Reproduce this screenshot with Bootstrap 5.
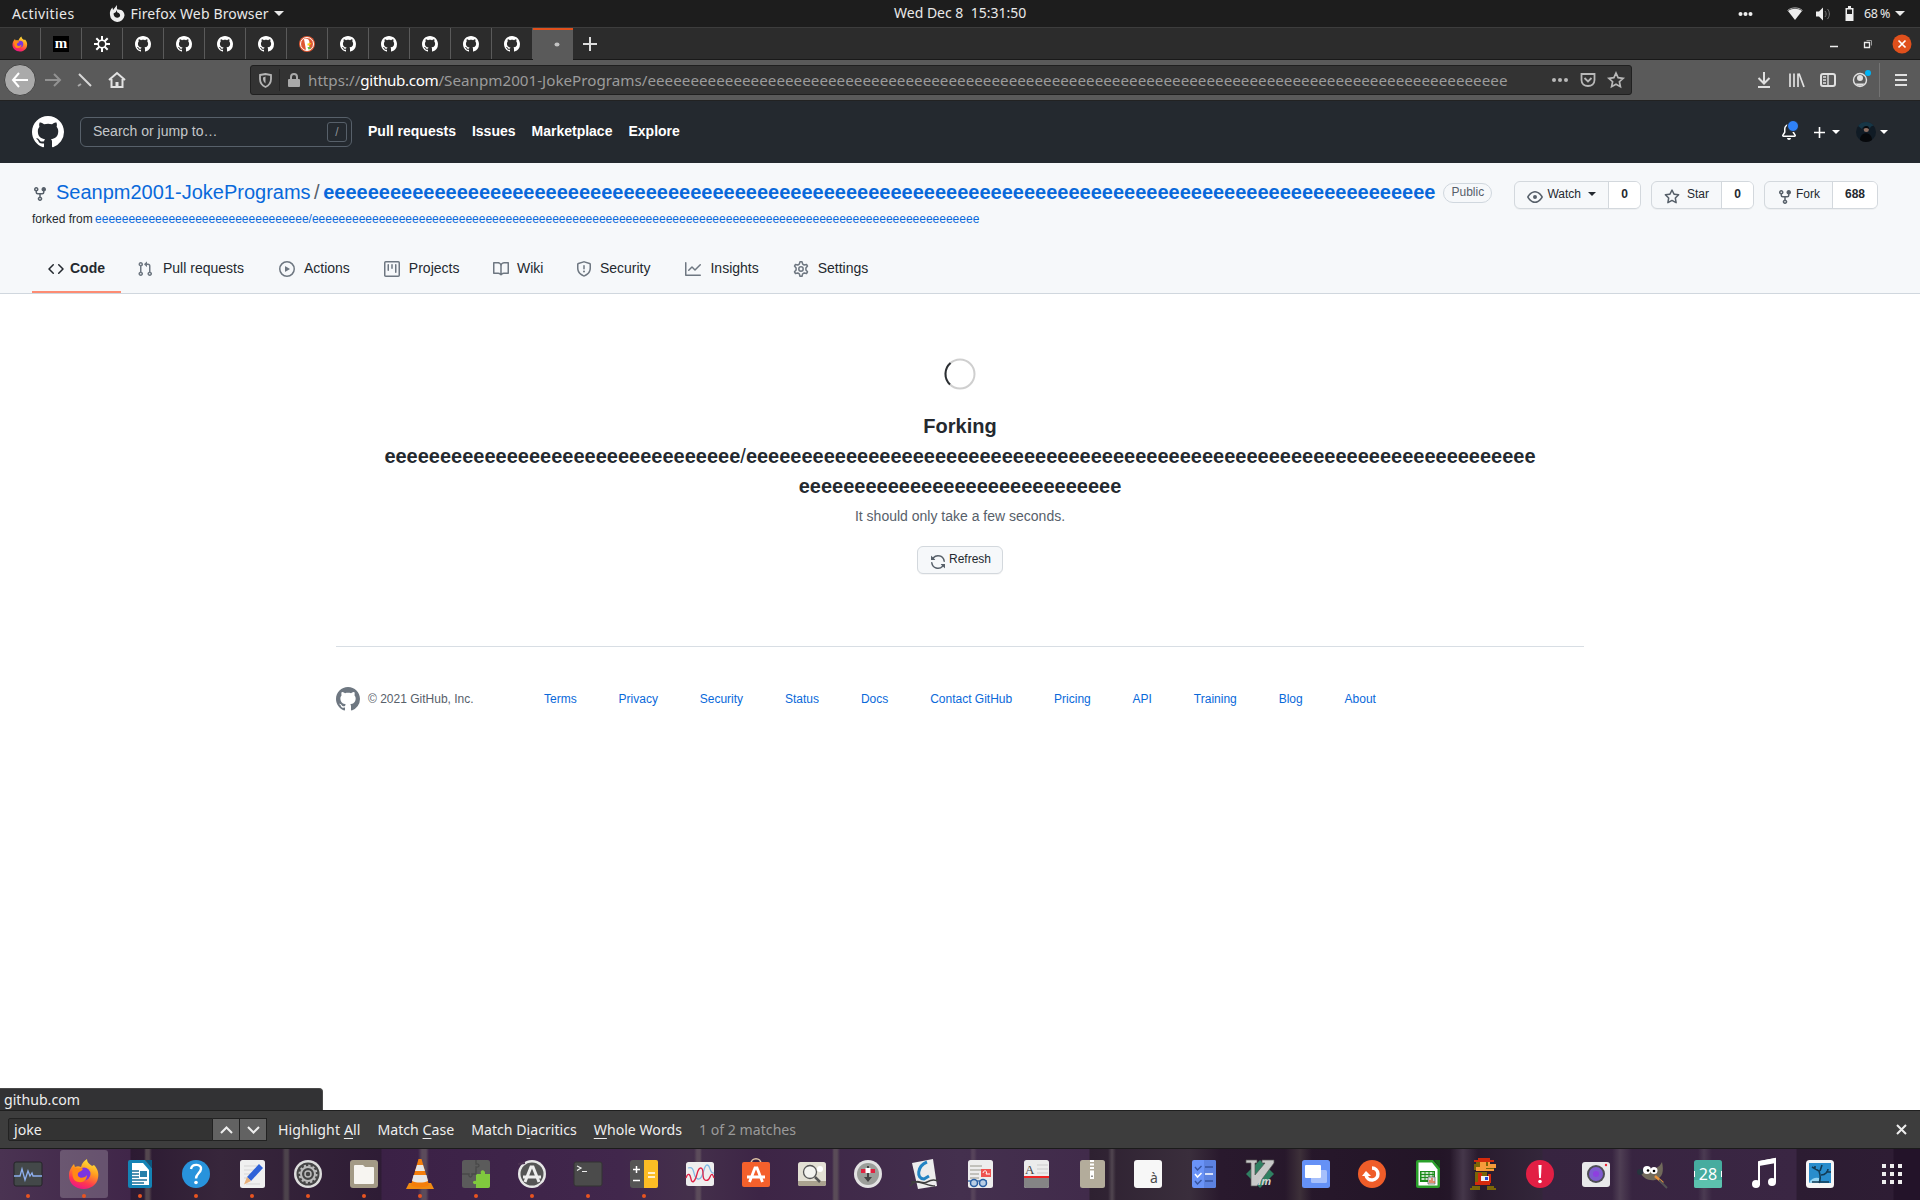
<!DOCTYPE html>
<html lang="en">
<head>
<meta charset="utf-8">
<title>Forking</title>
<meta name="viewport" content="width=device-width, initial-scale=1">
<link href="https://cdn.jsdelivr.net/npm/bootstrap@5.3.0/dist/css/bootstrap.min.css" rel="stylesheet">
<style>
body{height:1200px;overflow:hidden;background:#fff;color:#24292f;font:14px/21px "Liberation Sans",Arial,sans-serif}
a{text-decoration:none;color:#0969da}
svg{display:block;flex:none}
.oct{width:16px;height:16px;fill:currentColor}
.ui{font-family:"Noto Sans","Open Sans",sans-serif;font-size:14.15px;white-space:pre}
.panel{height:27px;background:#1d1d1d;color:#e9e9e9}
.panel .ui{font-size:14px}
.tabs{height:33px;background:#2c2c2c;border-top:1px solid #3d3d3d;border-bottom:1px solid #191919}
.tabx{width:41px;border-right:1px solid #5a5a5a;color:#fff}
.tabx svg{width:16px;height:16px}
.tabx.now{width:40px;background:#5a5a5a;border:0;border-top:2px solid #e0501c;margin-bottom:-1px}
.tools{height:41px;background:#5a5a5a;border-bottom:1px solid #222;color:#e0e0e0}
.urlbar{width:1382px;height:30px;background:#333;border:1px solid #202020;border-radius:3px;color:#9b9b9b}
.urlbar .ui{font-size:15.2px}
.backbtn{width:32px;height:32px;border-radius:50%;background:#aaa;border:1px solid #454545;color:#fff}
.ghead{height:62px;background:#24292f;color:#fff;padding-left:32px;padding-right:32px}
.gsearch{width:272px;height:30px;border:1px solid #57606a;border-radius:6px;color:#c3c6c9;padding:0 4px 0 12px}
.slashkey{width:20px;height:20px;border:1px solid #57606a;border-radius:3px;color:#8b9096;font-size:12px;line-height:18px}
.gnav{padding-bottom:1px}
.gnav a{color:#fff;font-weight:700}
.caret{width:0;height:0;border:4px solid transparent;border-top-color:currentColor;border-bottom:0}
.rhead{height:131px;background:#f6f8fa;border-bottom:1px solid #d0d7de}
.rtitle{font-size:20px;line-height:30px}
.pub{font-size:12px;line-height:17px;border:1px solid #d0d7de;border-radius:20px;color:#57606a;padding:0 7px 1px}
.gbtn{height:28px;background:#f6f8fa;border:1px solid #d3d8dd;border-radius:6px;font-size:12px;line-height:25px;box-shadow:0 1px 0 rgba(27,31,36,.04)}
.gbtn .oct{color:#57606a;margin-top:7px}
.cnt{background:#fff;border-left:1px solid #d3d8dd;border-radius:0 5px 5px 0;font-weight:700;height:26px}
.tabitem{height:48px;padding-bottom:2px;gap:9px;color:#24292f}
.tabitem .oct{color:#6e7781;margin-top:2px}
.tabitem.sel{font-weight:700;border-bottom:2px solid #fd8c73;padding:0 16px;gap:6px;width:89px}
.tabitem.sel .oct{color:#24292f}
.forkttl{font-size:20px;line-height:30px;font-weight:700}
.foot{width:1248px;border-top:1px solid #d8dee4;font-size:12px;color:#57606a}
.popstat{width:323px;height:22px;background:#323234;border-top:1px solid #4a4a4a;border-right:1px solid #4a4a4a;border-radius:0 4px 0 0;color:#eee;padding-left:4px;line-height:21px}
.findbar{height:39px;background:#3d3d3d;border-top:1px solid #1f1f1f;border-bottom:1px solid #1b1b1b;color:#eee;padding-left:8px}
.findin{width:205px;height:23px;background:#333;border:1px solid #222;border-radius:2px 0 0 2px;padding-left:5px;line-height:21px}
.findbtn{width:27px;height:23px;background:#626262;border:1px solid #222;border-left:0}
.findbar u{text-underline-offset:3px}
.dock{height:51px;background:
 linear-gradient(90deg,transparent 144px,#54474f 146px,#54474f 149px,transparent 152px,transparent 282px,#4d434c 285px,#4d434c 288px,transparent 290px,transparent 418px,#5b4b5b 422px,#5b4b5b 426px,transparent 429px,transparent 694px,#5c4c5b 697px,#5c4c5b 700px,transparent 702px,transparent 832px,#5a4c58 834px,#5a4c58 837px,transparent 840px,transparent 970px,#56435a 972px,#56435a 974px,transparent 977px,transparent 1108px,#514650 1112px,transparent 1116px,transparent 1285px,#3d3039 1300px,transparent 1312px,transparent 1450px,#45374a 1463px,transparent 1478px,transparent 1612px,#4f3f54 1620px,transparent 1632px,transparent 1698px,#4b3b52 1704px,transparent 1712px),
 linear-gradient(90deg,#4a3352 0,#402649 130px,#2c1a32 131px,#37263b 220px,#2e1c35 381px,#3b2146 382px,#41274c 620px,#44304b 690px,#3d2546 760px,#44304e 960px,#412b4b 1089px,#2e2131 1090px,#3a2e3c 1190px,#29192d 1220px,#231527 1440px,#33263a 1542px,#372440 1543px,#3a2643 1796px,#2c1c32 1797px,#2e1d34 1893px,#231329 1894px,#231329 100%)}
.app{width:56px;height:51px;padding-bottom:1px;position:relative;display:flex;flex:none;align-items:center;justify-content:center}
.app svg{width:32px;height:32px;overflow:visible;z-index:1}
.app.run::after{content:"";position:absolute;left:26px;bottom:2px;width:4px;height:4px;border-radius:50%;background:#e95420}
.app.cur::before{content:"";position:absolute;left:4px;top:1px;width:48px;height:48px;border-radius:3px;background:rgba(255,255,255,.2)}
.app svg text{font-family:"Noto Sans",sans-serif}
</style>
<script src="https://cdn.jsdelivr.net/npm/bootstrap@5.3.0/dist/js/bootstrap.bundle.min.js"></script>
</head>
<body class="d-flex flex-column">
<svg width="0" height="0" class="position-absolute">
<symbol id="gh" viewBox="0 0 16 16"><path d="M8 0C3.58 0 0 3.58 0 8c0 3.54 2.29 6.53 5.47 7.59.4.07.55-.17.55-.38 0-.19-.01-.82-.01-1.49-2.01.37-2.53-.49-2.69-.94-.09-.23-.48-.94-.82-1.13-.28-.15-.68-.52-.01-.53.63-.01 1.08.58 1.23.82.72 1.21 1.87.87 2.33.66.07-.52.28-.87.51-1.07-1.78-.2-3.64-.89-3.64-3.95 0-.87.31-1.59.82-2.15-.08-.2-.36-1.02.08-2.12 0 0 .67-.21 2.2.82.64-.18 1.32-.27 2-.27.68 0 1.36.09 2 .27 1.53-1.04 2.2-.82 2.2-.82.44 1.1.16 1.92.08 2.12.51.56.82 1.27.82 2.15 0 3.07-1.87 3.75-3.65 3.95.29.25.54.73.54 1.48 0 1.07-.01 1.93-.01 2.2 0 .21.15.46.55.38A8.013 8.013 0 0016 8c0-4.42-3.58-8-8-8z"/></symbol>
<symbol id="fork" viewBox="0 0 16 16"><path d="M5 3.25a.75.75 0 11-1.5 0 .75.75 0 011.5 0zm0 2.122a2.25 2.25 0 10-1.5 0v.878A2.25 2.25 0 005.75 8.5h1.5v2.128a2.251 2.251 0 101.5 0V8.5h1.5a2.25 2.25 0 002.25-2.25v-.878a2.25 2.25 0 10-1.5 0v.878a.75.75 0 01-.75.75h-4.5A.75.75 0 015 6.25v-.878zm3.75 7.378a.75.75 0 11-1.5 0 .75.75 0 011.5 0zm3-8.75a.75.75 0 100-1.5.75.75 0 000 1.5z"/></symbol>
<linearGradient id="ffo" x1=".7" y1="0" x2=".3" y2="1"><stop offset="0" stop-color="#ffe83c"/><stop offset=".4" stop-color="#ff9a1f"/><stop offset=".75" stop-color="#ff3750"/><stop offset="1" stop-color="#e9148c"/></linearGradient>
<symbol id="ff" viewBox="-16 -16 32 32"><path d="M-14-4c1-2 2-4 4-6l1 3c2-1 4-1 6 0 1-4 3-6 6-8 0 4 3 5 5 7l2-1c4 4 5 9 4 13-1 7-8 11-14 11-9 0-15-6-15-13 0-2 0-4 1-6z" fill="url(#ffo)"/><circle cx="0" cy="0" r="6.5" fill="#7a35e0"/><path d="M-11-7c3 1 5 2 9 1 1 1 1 2-1 3s-4 2-3 5c2 3 7 2 9-1 0 5-4 8-8 7-5 0-8-5-6-15z" fill="#ff8a16"/></symbol>
</svg>

<header class="panel d-flex align-items-center position-relative">
  <span class="ui" style="margin-left:12px;letter-spacing:.42px">Activities</span>
  <svg style="margin-left:34px" width="16" height="20" viewBox="0 0 16 20"><path d="M1 11C.5 8 1.500 5 3.500 3.500L4 6l4-5c0 2-.5 3 .5 4.500C13 5 15.500 8 15.500 11.500a7.300 7.500 0 01-14.500-.5z" fill="#eee"/><path d="M4.500 9.500L7 8V6l1.500 2.500c2 .5 3 2 2.500 3.500-1 3-6.500 2-6.500-2.500z" fill="#1d1d1d"/></svg>
  <span class="ui" style="margin-left:6px;letter-spacing:.14px">Firefox Web Browser</span><i class="caret" style="margin-left:5px;border-width:5px 5px 0"></i>
  <span class="ui position-absolute" style="left:894px;top:2px">Wed Dec 8  15:31:50</span>
  <div class="ms-auto d-flex align-items-center" style="margin-right:15px">
    <svg width="150" height="22" viewBox="1738 2 150 22" style="margin-right:-24px"><g fill="#eee"><circle cx="1740.500" cy="13" r="2"/><circle cx="1745.500" cy="13" r="2"/><circle cx="1750.500" cy="13" r="2"/><path d="M1788 10c4-3 10-3 14 0l-7 9z"/><path d="M1816 10.500h3l4-4v13l-4-4h-3z"/><path d="M1848 5h3v2h2.500v13h-8V7h2.500z"/></g><path d="M1787.500 9.500c4-3.500 11-3.500 15 0" fill="none" stroke="#aaa"/><path d="M1825 10c1.500 2 1.500 4 0 6M1827.500 8c2.500 3 2.500 7 0 10" fill="none" stroke="#777"/><path d="M1847 8.500h5v4.500h-5z" fill="#1d1d1d"/></svg>
    <span class="ui" style="font-size:12.500px;letter-spacing:-.5px">68 %</span><i class="caret" style="margin-left:5px;border-width:5px 5px 0"></i>
  </div>
</header>

<nav class="tabs d-flex">
  <div class="tabx d-flex align-items-center justify-content-center"><svg><use href="#ff"/></svg></div>
  <div class="tabx d-flex align-items-center justify-content-center"><svg viewBox="0 0 16 16"><path d="M0 0h16v16H0z"/><text x="8" y="12" text-anchor="middle" font-family="Liberation Serif,serif" font-weight="700" font-size="15" fill="#fff">m</text></svg></div>
  <div class="tabx d-flex align-items-center justify-content-center"><svg viewBox="0 0 16 16" fill="none" stroke="#fff"><circle cx="8" cy="8" r="3.800" stroke-width="1.600"/><path stroke-width="2" d="M8 0v4M8 12v4M0 8h4M12 8h4M2.300 2.300l3 3M10.700 10.700l3 3M2.300 13.700l3-3M10.700 5.300l3-3"/></svg></div>
  <div class="tabx d-flex align-items-center justify-content-center"><svg fill="#fff"><use href="#gh"/></svg></div>
  <div class="tabx d-flex align-items-center justify-content-center"><svg fill="#fff"><use href="#gh"/></svg></div>
  <div class="tabx d-flex align-items-center justify-content-center"><svg fill="#fff"><use href="#gh"/></svg></div>
  <div class="tabx d-flex align-items-center justify-content-center"><svg fill="#fff"><use href="#gh"/></svg></div>
  <div class="tabx d-flex align-items-center justify-content-center"><svg viewBox="0 0 16 16"><circle cx="8" cy="8" r="8" fill="#de5833"/><circle cx="8" cy="8" r="6.500" fill="none" stroke="#fff"/><path d="M5 3c3-1 5 0 5.500 3L10 9l1 5H7z" fill="#fff"/><path d="M8.500 7.500l4-.5-2 2.500H8.500z" fill="#fdd20a"/><path d="M8.500 11l3 0v2l-2 .5z" fill="#65bc46"/></svg></div>
  <div class="tabx d-flex align-items-center justify-content-center"><svg fill="#fff"><use href="#gh"/></svg></div>
  <div class="tabx d-flex align-items-center justify-content-center"><svg fill="#fff"><use href="#gh"/></svg></div>
  <div class="tabx d-flex align-items-center justify-content-center"><svg fill="#fff"><use href="#gh"/></svg></div>
  <div class="tabx d-flex align-items-center justify-content-center"><svg fill="#fff"><use href="#gh"/></svg></div>
  <div class="tabx d-flex align-items-center justify-content-center"><svg fill="#fff"><use href="#gh"/></svg></div>
  <div class="tabx now d-flex align-items-center justify-content-center"><svg viewBox="0 0 16 16"><ellipse cx="12" cy="7.500" rx="2.500" ry="2" fill="#c4c4c4"/></svg></div>
  <svg style="margin:9px 0 0 10px" width="14" height="14" viewBox="0 0 14 14"><path d="M7 0v14M0 7h14" stroke="#ddd" stroke-width="2"/></svg>
  <svg class="ms-auto me-2" width="84" height="31" viewBox="1828 28 84 31"><path d="M1830 46.500h8" stroke="#eee" stroke-width="1.500"/><path d="M1864.500 42.500h5v5h-5z" fill="none" stroke="#eee" stroke-width="1.300"/><path d="M1866.500 40.500h5v5" fill="none" stroke="#999"/><circle cx="1902" cy="44" r="9.500" fill="#e0501c"/><path d="M1898.500 40.500l7 7m0-7l-7 7" stroke="#fff" stroke-width="1.700"/></svg>
</nav>

<nav class="tools d-flex align-items-center">
  <div class="backbtn d-flex align-items-center justify-content-center" style="margin-left:4px"><svg width="18" height="16" viewBox="0 0 18 16" fill="none" stroke="#fff" stroke-width="2"><path d="M17 8H2M8 1L2 8l6 7"/></svg></div>
  <svg width="90" height="22" viewBox="42 69 90 22" style="margin-left:6px" fill="none" stroke="#e2e2e2" stroke-width="2"><path stroke="#929292" d="M45 80h15M54 74l6 6-6 6"/><path stroke="#d8d8d8" d="M79 74l12 12"/><path stroke="#aaa" d="M78 86l3-2"/><path d="M109 80l8-7 8 7M111.500 79v8h11v-8"/><path d="M117 87v-5" stroke-width="3"/></svg>
  <div class="urlbar d-flex align-items-center" style="margin-left:118px">
    <svg style="margin-left:8px" width="13" height="15" viewBox="0 0 13 15"><path d="M1 2l5.500-1L12 2v4c0 4-2 6.500-5.500 8C3 12.500 1 10 1 6z" fill="none" stroke="#b5b5b5" stroke-width="1.800"/><path d="M6.500 3.500v7C4.500 9 4 7.500 4 4.500z" fill="#b5b5b5"/></svg>
    <i style="width:1px;height:22px;background:#252525;margin:0 8px 0 7px"></i>
    <svg width="12" height="14" viewBox="0 0 12 14"><path d="M3 7V4a3 3 0 016 0v3" fill="none" stroke="#aaa" stroke-width="2"/><rect y="6" width="12" height="8" rx="1" fill="#aaa"/></svg>
    <div class="ui d-flex" style="margin-left:8px"><span>https://</span><span class="text-white" style="letter-spacing:-.35px">github.com</span><span>/Seanpm2001-JokePrograms/</span><span style="letter-spacing:.035px">eeeeeeeeeeeeeeeeeeeeeeeeeeeeeeeeeeeeeeeeeeeeeeeeeeeeeeeeeeeeeeeeeeeeeeeeeeeeeeeeeeeeeeeeeeeeeeeeeeee</span></div>
    <svg class="ms-auto" style="margin-right:5px" width="76" height="20" viewBox="1550 70 76 20"><g fill="#b8b8b8"><circle cx="1554" cy="80" r="2"/><circle cx="1560" cy="80" r="2"/><circle cx="1566" cy="80" r="2"/></g><path d="M1581.500 74h13v6c0 4-3 6-6.500 6s-6.500-2-6.500-6z M1584.500 78l3.500 3.500 3.500-3.500" fill="none" stroke="#b8b8b8" stroke-width="1.800"/><path d="M1616 73l2.100 4.700 5 .6-3.700 3.400 1 5-4.400-2.500-4.400 2.500 1-5-3.700-3.400 5-.6z" fill="none" stroke="#b8b8b8" stroke-width="1.700"/></svg>
  </div>
  <svg class="ms-auto" width="170" height="40" viewBox="1750 60 170 40" fill="none" stroke="#e0e0e0" stroke-width="2"><path d="M1764 72v11M1758.500 78l5.500 5.500 5.500-5.500M1758 87h12"/><path d="M1790 73.500V87M1794 73.500V87M1798 73.500V87M1799 73.500l5 13.500" stroke-width="1.700"/><rect x="1821" y="74" width="14" height="12" rx="2"/><path d="M1828 74v12M1823 77h3M1823 80h3M1823 83h3" stroke-width="1.400"/><circle cx="1860" cy="80" r="6.500" stroke-width="1.400"/><circle cx="1860" cy="78" r="3" fill="#e0e0e0" stroke="none"/><path d="M1855.500 83.500a5 4 0 009 0z" fill="#e0e0e0" stroke="none"/><circle cx="1868" cy="73" r="3" fill="#00b3f4" stroke="none"/><path d="M1879.500 63v34" stroke="#737373" stroke-width="1"/><path d="M1895 75h12M1895 80h12M1895 85h12"/></svg>
</nav>

<header class="ghead d-flex align-items-center">
  <svg width="32" height="32" fill="#fff"><use href="#gh"/></svg>
  <div class="gsearch d-flex align-items-center justify-content-between ms-3"><span style="margin-top:-2px">Search or jump to…</span><span class="slashkey text-center">/</span></div>
  <nav class="gnav d-flex gap-3 ms-3"><a href="#">Pull requests</a><a href="#">Issues</a><a href="#">Marketplace</a><a href="#">Explore</a></nav>
  <div class="ms-auto d-flex align-items-center">
    <div class="position-relative"><svg class="oct" viewBox="0 0 16 16"><path d="M8 16a2 2 0 001.985-1.750c.017-.137-.097-.25-.235-.25h-3.500c-.138 0-.252.113-.235.25A2 2 0 008 16z"/><path fill-rule="evenodd" d="M8 1.500A3.500 3.500 0 004.500 5v2.947c0 .346-.102.683-.294.97l-1.703 2.556 0 .027h10.994l0-.027-1.703-2.556a1.750 1.750 0 01-.294-.97V5A3.500 3.500 0 008 1.500zM3 5a5 5 0 0110 0v2.947c0 .05.015.098.042.139l1.703 2.555A1.518 1.518 0 0113.482 13H2.518a1.518 1.518 0 01-1.263-2.360l1.703-2.554A.25.25 0 003 7.947V5z"/></svg><i class="position-absolute rounded-circle" style="left:6px;top:-4px;width:12px;height:12px;background:#2f81f7;border:1px solid #24292f"></i></div>
    <svg style="margin-left:17px" width="11" height="11" viewBox="0 0 11 11"><path d="M5.500 0v11M0 5.500h11" stroke="#fff" stroke-width="1.600"/></svg><i class="caret" style="margin-left:7px"></i>
    <svg style="margin-left:16px" width="20" height="20" viewBox="0 0 20 20"><circle cx="10" cy="10" r="10" fill="#101b25"/><path d="M10 0a10 10 0 018 4c-3-1-4 2-4 3-1-4-7-4-8 0L2 4a10 10 0 018-4z" fill="#173646"/><circle cx="10.300" cy="7.500" r="2.500" fill="#8d6f63"/><path d="M7.500 7c0-4 6-4 5.500 0-2-1.500-4-1.500-5.500 0zM4 18c0-9 12-9 12 0-3 2.500-9 2.500-12 0z" fill="#07090c"/></svg><i class="caret" style="margin-left:4px"></i>
  </div>
</header>

<section class="rhead">
  <div class="d-flex" style="padding:15px 42px 0 32px;height:48px">
    <svg class="oct" style="margin-top:8px;color:#57606a"><use href="#fork"/></svg>
    <div class="rtitle ms-2" style="margin-top:-1px"><a href="#">Seanpm2001-JokePrograms</a><span style="margin:0 3.500px;color:#57606a">/</span><a href="#" class="fw-bold">eeeeeeeeeeeeeeeeeeeeeeeeeeeeeeeeeeeeeeeeeeeeeeeeeeeeeeeeeeeeeeeeeeeeeeeeeeeeeeeeeeeeeeeeeeeeeeeeeeee</a></div>
    <span class="pub align-self-start" style="margin:5px 0 0 8px">Public</span>
    <div class="ms-auto d-flex align-items-start" style="gap:10px;padding-top:3px">
      <div class="gbtn d-flex"><svg class="oct" style="margin-left:12px" viewBox="0 0 16 16"><path fill-rule="evenodd" d="M1.679 7.932c.412-.621 1.242-1.750 2.366-2.717C5.175 4.242 6.527 3.500 8 3.500c1.473 0 2.824.742 3.955 1.715 1.124.967 1.954 2.096 2.366 2.717a.119.119 0 010 .136c-.412.621-1.242 1.750-2.366 2.717C10.825 11.758 9.473 12.500 8 12.500c-1.473 0-2.824-.742-3.955-1.715C2.920 9.818 2.090 8.690 1.679 8.068a.119.119 0 010-.136zM8 2c-1.981 0-3.670.992-4.933 2.078C1.797 5.169.880 6.423.430 7.100a1.619 1.619 0 000 1.798c.45.678 1.367 1.932 2.637 3.024C4.329 13.008 6.019 14 8 14c1.981 0 3.670-.992 4.933-2.078 1.270-1.091 2.187-2.345 2.637-3.023a1.619 1.619 0 000-1.798c-.45-.678-1.367-1.932-2.637-3.023C11.671 2.992 9.981 2 8 2zm0 8a2 2 0 100-4 2 2 0 000 4z"/></svg><span style="margin-left:4px">Watch</span><i class="caret" style="margin:10px 12px 0 7px"></i><span class="cnt text-center" style="width:32px">0</span></div>
      <div class="gbtn d-flex"><svg class="oct" style="margin-left:12px" viewBox="0 0 16 16"><path fill-rule="evenodd" d="M8 .25a.75.75 0 01.673.418l1.882 3.815 4.210.612a.75.75 0 01.416 1.279l-3.046 2.970.719 4.192a.75.75 0 01-1.088.791L8 12.347l-3.766 1.980a.75.75 0 01-1.088-.79l.72-4.194L.818 6.374a.75.75 0 01.416-1.280l4.210-.611L7.327.668A.75.75 0 018 .25zm0 2.445L6.615 5.500a.75.75 0 01-.564.41l-3.097.45 2.240 2.184a.75.75 0 01.216.664l-.528 3.084 2.769-1.456a.75.75 0 01.698 0l2.770 1.456-.53-3.084a.75.75 0 01.216-.664l2.240-2.183-3.096-.45a.75.75 0 01-.564-.41L8 2.694z"/></svg><span style="margin:0 12px 0 7px">Star</span><span class="cnt text-center" style="width:32px">0</span></div>
      <div class="gbtn d-flex"><svg class="oct" style="margin-left:12px"><use href="#fork"/></svg><span style="margin:0 12px 0 3px">Fork</span><span class="cnt text-center" style="width:45px">688</span></div>
    </div>
  </div>
  <div style="padding-left:32px;height:34px;line-height:16px;font-size:12px"><span>forked from </span><a href="#" style="margin-left:-1px">eeeeeeeeeeeeeeeeeeeeeeeeeeeeeeee/eeeeeeeeeeeeeeeeeeeeeeeeeeeeeeeeeeeeeeeeeeeeeeeeeeeeeeeeeeeeeeeeeeeeeeeeeeeeeeeeeeeeeeeeeeeeeeeeeeee</a></div>
  <nav class="d-flex" style="padding-left:32px;gap:35px">
    <a class="tabitem sel d-flex align-items-center" href="#" style="margin-right:-19px"><svg class="oct" viewBox="0 0 16 16"><path d="M4.720 3.220a.75.75 0 011.060 1.060L2.060 8l3.720 3.720a.75.75 0 11-1.060 1.060L.47 8.530a.75.75 0 010-1.060l4.250-4.250zm6.560 0a.75.75 0 10-1.060 1.060L13.940 8l-3.720 3.720a.75.75 0 101.060 1.060l4.250-4.250a.75.75 0 000-1.060l-4.250-4.250z"/></svg>Code</a>
    <a class="tabitem d-flex align-items-center" href="#" style="gap:10px"><svg class="oct" viewBox="0 0 16 16"><path fill-rule="evenodd" d="M7.177 3.073L9.573.677A.25.25 0 0110 .854v4.792a.25.25 0 01-.427.177L7.177 3.427a.25.25 0 010-.354zM3.750 2.500a.75.75 0 100 1.500.75.75 0 000-1.500zm-2.250.75a2.250 2.250 0 113 2.122v5.256a2.251 2.251 0 11-1.500 0V5.372A2.250 2.250 0 011.500 3.250zM11 2.500h-1V4h1a1 1 0 011 1v5.628a2.251 2.251 0 101.500 0V5A2.500 2.500 0 0011 2.500zm1 10.250a.75.75 0 111.500 0 .75.75 0 01-1.500 0zM3.750 12a.75.75 0 100 1.500.75.75 0 000-1.500z"/></svg>Pull requests</a>
    <a class="tabitem d-flex align-items-center" href="#"><svg class="oct" viewBox="0 0 16 16"><path fill-rule="evenodd" d="M1.500 8a6.500 6.500 0 1113 0 6.500 6.500 0 01-13 0zM8 0a8 8 0 100 16A8 8 0 008 0zM6.379 5.227A.25.25 0 006 5.442v5.117a.25.25 0 00.379.214l4.264-2.559a.25.25 0 000-.428L6.379 5.227z"/></svg>Actions</a>
    <a class="tabitem d-flex align-items-center" href="#" style="margin-left:-1px"><svg class="oct" viewBox="0 0 16 16"><path fill-rule="evenodd" d="M1.750 0A1.750 1.750 0 000 1.750v12.500C0 15.216.784 16 1.750 16h12.500A1.750 1.750 0 0016 14.250V1.750A1.750 1.750 0 0014.250 0H1.750zM1.500 1.750a.25.25 0 01.25-.25h12.500a.25.25 0 01.25.25v12.500a.25.25 0 01-.25.25H1.750a.25.25 0 01-.25-.25V1.750zM11.750 3a.75.75 0 00-.75.75v7.500a.75.75 0 001.500 0v-7.500a.75.75 0 00-.75-.75zm-8.250.75a.75.75 0 011.500 0v5.500a.75.75 0 01-1.500 0v-5.500zM8 3a.75.75 0 00-.75.75v3.500a.75.75 0 001.500 0v-3.500A.75.75 0 008 3z"/></svg>Projects</a>
    <a class="tabitem d-flex align-items-center" href="#" style="gap:8px;margin-left:-1.500px"><svg class="oct" viewBox="0 0 16 16"><path fill-rule="evenodd" d="M0 1.750A.75.75 0 01.75 1h4.253c1.227 0 2.317.59 3 1.501A3.744 3.744 0 0111.006 1h4.245a.75.75 0 01.75.75v10.500a.75.75 0 01-.75.75h-4.507a2.250 2.250 0 00-1.591.659l-.622.621a.75.75 0 01-1.060 0l-.622-.621A2.250 2.250 0 005.258 13H.75a.75.75 0 01-.75-.75V1.750zm8.755 3a2.250 2.250 0 012.250-2.250H14.500v9h-3.757c-.71 0-1.400.201-1.992.572l.004-7.322zm-1.504 7.324l.004-5.073-.002-2.253A2.250 2.250 0 005.003 2.500H1.500v9h3.757a3.750 3.750 0 011.994.574z"/></svg>Wiki</a>
    <a class="tabitem d-flex align-items-center" href="#" style="gap:8px;margin-left:-2.500px"><svg class="oct" viewBox="0 0 16 16"><path fill-rule="evenodd" d="M7.467.133a1.750 1.750 0 011.066 0l5.250 1.680A1.750 1.750 0 0115 3.480V7c0 1.566-.32 3.182-1.303 4.682-.983 1.498-2.585 2.813-5.032 3.855a1.700 1.700 0 01-1.330 0c-2.447-1.042-4.049-2.357-5.032-3.855C1.320 10.182 1 8.566 1 7V3.480a1.750 1.750 0 011.217-1.667l5.250-1.680zm.61 1.429a.25.25 0 00-.153 0l-5.250 1.680a.25.25 0 00-.174.238V7c0 1.358.275 2.666 1.057 3.860.784 1.194 2.121 2.340 4.366 3.297a.2.2 0 00.154 0c2.245-.956 3.582-2.104 4.366-3.298C13.225 9.666 13.500 8.360 13.500 7V3.480a.25.25 0 00-.174-.237l-5.250-1.680zM9 10.500a1 1 0 11-2 0 1 1 0 012 0zm-.25-5.750a.75.75 0 10-1.500 0v3a.75.75 0 001.500 0v-3z"/></svg>Security</a>
    <a class="tabitem d-flex align-items-center" href="#"><svg class="oct" viewBox="0 0 16 16"><path d="M1.500 1.750a.75.75 0 00-1.500 0v12.500c0 .414.336.75.75.75h14.500a.75.75 0 000-1.500H1.500V1.750zm14.280 2.530a.75.75 0 00-1.060-1.060L10 7.940 7.530 5.470a.75.75 0 00-1.060 0L3.220 8.720a.75.75 0 001.060 1.060L7 7.060l2.470 2.470a.75.75 0 001.060 0l5.250-5.250z"/></svg>Insights</a>
    <a class="tabitem d-flex align-items-center" href="#" style="margin-left:-1px"><svg class="oct" viewBox="0 0 16 16" style="fill:none" stroke="currentColor" stroke-width="1.500"><path d="M7 .8h2l.7 2.300 1.500.9 2.300-.6 1 1.700L12.900 7v2l1.600 1.800-1 1.700-2.300-.6-1.500.9L9 15.200H7l-.7-2.400-1.500-.9-2.300.6-1-1.700L3.100 9V7L1.500 5.100l1-1.700 2.300.6 1.500-.9z" stroke-linejoin="round"/><circle cx="8" cy="8" r="2.200"/></svg>Settings</a>
  </nav>
</section>

<main class="flex-grow-1 d-flex flex-column align-items-center position-relative text-center">
  <svg style="margin-top:64px" width="32" height="32" viewBox="-16 -16 32 32" fill="none" stroke-width="2"><circle r="14.500" stroke="#cfcfcf"/><path d="M-9.500-11A14.500 14.500 0 00-10 10.500" stroke="#2b2f33"/></svg>
  <div class="forkttl" style="margin-top:21px">Forking<br>eeeeeeeeeeeeeeeeeeeeeeeeeeeeeeee<span class="fw-normal">/</span>eeeeeeeeeeeeeeeeeeeeeeeeeeeeeeeeeeeeeeeeeeeeeeeeeeeeeeeeeeeeeeeeeeeeeee<br>eeeeeeeeeeeeeeeeeeeeeeeeeeeee</div>
  <div style="margin-top:5px;color:#57606a">It should only take a few seconds.</div>
  <a href="#" class="gbtn d-flex" style="margin-top:19px;color:#24292f;width:86px"><svg class="oct" style="margin-left:12px" viewBox="0 0 16 16"><path d="M8 2.500a5.487 5.487 0 00-4.131 1.869l1.204 1.204A.25.25 0 014.896 6H1.250A.25.25 0 011 5.750V2.104a.25.25 0 01.427-.177l1.380 1.380A7.001 7.001 0 0114.950 7.160a.75.75 0 11-1.490.178A5.501 5.501 0 008 2.500zM1.705 8.005a.75.75 0 01.834.656 5.501 5.501 0 009.592 2.970l-1.204-1.204a.25.25 0 01.177-.427h3.646a.25.25 0 01.25.25v3.646a.25.25 0 01-.427.177l-1.380-1.380A7.001 7.001 0 011.050 8.840a.75.75 0 01.656-.834z"/></svg><span style="margin-left:3px">Refresh</span></a>
  <footer class="foot d-flex align-items-center" style="margin-top:72px;padding-top:40px">
    <svg width="24" height="24" fill="#6e7781"><use href="#gh"/></svg><span class="ms-2">© 2021 GitHub, Inc.</span>
    <nav class="d-flex justify-content-between" style="width:832px;margin-left:auto;margin-right:208px"><a href="#">Terms</a><a href="#">Privacy</a><a href="#">Security</a><a href="#">Status</a><a href="#">Docs</a><a href="#">Contact GitHub</a><a href="#">Pricing</a><a href="#">API</a><a href="#">Training</a><a href="#">Blog</a><a href="#">About</a></nav>
  </footer>
  <div class="popstat ui position-absolute bottom-0 start-0 text-start">github.com</div>
</main>

<div class="findbar ui d-flex align-items-center">
  <div class="findin">joke</div>
  <div class="findbtn d-flex align-items-center justify-content-center"><svg width="13" height="8" viewBox="0 0 13 8"><path d="M1 7l5.500-5.500L12 7" fill="none" stroke="#eee" stroke-width="2"/></svg></div>
  <div class="findbtn d-flex align-items-center justify-content-center"><svg width="13" height="8" viewBox="0 0 13 8"><path d="M1 1l5.500 5.500L12 1" fill="none" stroke="#eee" stroke-width="2"/></svg></div>
  <div class="d-flex" style="margin-left:11px;gap:17px"><span style="letter-spacing:.08px">Highlight <u>A</u>ll</span><span>Match <u>C</u>ase</span><span>Match D<u>i</u>acritics</span><span><u>W</u>hole Words</span><span style="color:#9a9a9a">1 of 2 matches</span></div>
  <svg class="ms-auto" style="margin-right:13px" width="11" height="11" viewBox="0 0 11 11"><path d="M1 1l9 9m0-9l-9 9" stroke="#eee" stroke-width="2"/></svg>
</div>

<nav class="dock d-flex">
  <div class="app run"><svg viewBox="-16 -16 32 32"><rect x="-14" y="-12" width="28" height="24" rx="2" fill="#434849" stroke="#252528"/><path d="M-14 2h6l2-7 3 11 3-9 2 5 2-3 1 3h9" fill="none" stroke="#8fb0f0" stroke-width="1.300"/></svg></div>
  <div class="app run cur"><svg><use href="#ff"/></svg></div>
  <div class="app run"><svg viewBox="-16 -16 32 32"><path d="M-10-14H5l7 8v18q0 2-2 2h-20q-2 0-2-2v-24q0-2 2-2z" fill="#1483b5"/><path d="M6-14h6v8z" fill="#0b5980"/><path d="M-8-11H3l6 7v15H-8z" fill="#fff"/><path d="M-8-3h7M-8 0h7M-8 3h7M-8 6H7M-8 9h12" stroke="#1b6f98" stroke-width="1.300"/><path d="M0-3h7v6H0z" fill="#2880aa"/></svg></div>
  <div class="app run"><svg viewBox="-16 -16 32 32"><circle r="14" fill="#2893dc"/><path d="M-5-5c1-6 11-5 10 0C4.500-1 0 0 0 4.500" fill="none" stroke="#fff" stroke-width="2.400"/><circle cy="8.500" r="1.800" fill="#fff"/></svg></div>
  <div class="app run"><svg viewBox="-16 -16 32 32"><rect x="-12" y="-14" width="25" height="28" rx="2.500" fill="#f0f0f0"/><path d="M-8-8H8M-8-4H4M-8 0H1M-8 4h6M-6 10H8" stroke="#d5d5d5"/><path d="M-5 3L7-10l4 4L-1 7z" fill="#2f62d8"/><path d="M-5 3l4 4-7 3.500z" fill="#e8b07a"/></svg></div>
  <div class="app run"><svg viewBox="-16 -16 32 32"><circle r="14" fill="#ddd"/><circle r="11.500" fill="#454545"/><circle r="7" fill="none" stroke="#bbb" stroke-width="2"/><circle r="8.500" fill="none" stroke="#bbb" stroke-width="2" stroke-dasharray="2.200 2.250"/><circle r="3" fill="none" stroke="#bbb" stroke-width="1.500"/></svg></div>
  <div class="app run"><svg viewBox="-16 -16 32 32"><rect x="-14" y="-14" width="28" height="28" rx="3" fill="#a39a86"/><path d="M-9-9h8l2 2h8q1 0 1 1V9q0 1-1 1H-9q-1 0-1-1V-8q0-1 1-1z" fill="#f7f5f1"/></svg></div>
  <div class="app run"><svg viewBox="-16 -16 32 32"><path d="M-11 9h22l3 6h-28z" fill="#f08a12"/><path d="M-1.500-15h3L9 11c-4 3-14 3-18 0z" fill="#f57e0b"/><path d="M-3-9h6l2 6H-5z M-6.500 1h13l1.500 6c-5 2-11 2-16 0z" fill="#e6e6e6"/></svg></div>
  <div class="app run"><svg viewBox="-16 -16 32 32"><rect x="-14" y="-14" width="28" height="28" rx="2.500" fill="#5b5b5b"/><path d="M0 0h14v12q0 2-2 2H0v-4c-4 1-4-4 0-3zM5 0c-2-5 5-5 4 0z" fill="#80c83e"/><path d="M0-14v4c4-1 4 4 0 3v7h-4c1 4-4 4-3 0h-7" fill="none" stroke="#494949" stroke-width="1.300"/></svg></div>
  <div class="app run"><svg viewBox="-16 -16 32 32"><circle r="14" fill="#e7e7e7"/><circle r="11.500" fill="#555"/><path d="M-7 8L-1-7h2L7 8M-9 3H9" fill="none" stroke="#eee" stroke-width="3"/><path d="M-14-10l7-1M7 13l5-4" stroke="#4a3050" stroke-width="2"/></svg></div>
  <div class="app run"><svg viewBox="-16 -16 32 32"><rect x="-14" y="-12" width="28" height="24" rx="2" fill="#4b4b4b" stroke="#333"/><path d="M-11-8l4 2-4 2.500M-6-2.500h5" fill="none" stroke="#eee" stroke-width="1.200"/></svg></div>
  <div class="app run"><svg viewBox="-16 -16 32 32"><rect x="-14" y="-14" width="28" height="28" rx="3" fill="#555"/><path d="M0-14h12q2 0 2 2v24q0 2-2 2H0z" fill="#fcbd24"/><path d="M-11-4.500h7M-7.500-8v7M-11 6.500h7M4-1h7M4 3h7" stroke="#fff" stroke-width="1.500"/></svg></div>
  <div class="app"><svg viewBox="-16 -16 32 32"><rect x="-14" y="-12" width="28" height="24" rx="2.500" fill="#eee"/><path d="M-12-6c8-3 4 10 10 11S3-9 7-9s2 9 7 8" fill="none" stroke="#83bae3" stroke-width="1.300"/><path d="M-14 4c2-6 4-4 5 1s4 3 6-5 6-8 6 0 5 8 7 3 3-2 4 1" fill="none" stroke="#df2245" stroke-width="1.300"/></svg></div>
  <div class="app"><svg viewBox="-16 -16 32 32"><path d="M-5-10c0-7 10-7 10 0" fill="none" stroke="#e3c6a6" stroke-width="1.600"/><rect x="-14" y="-12" width="28" height="25" rx="2" fill="#f4602c"/><path d="M-6.500 8L-1-6h2L6.500 8M-9 3H9" fill="none" stroke="#fff" stroke-width="2.800"/></svg></div>
  <div class="app"><svg viewBox="-16 -16 32 32"><rect x="-14" y="-12" width="28" height="24" rx="2.500" fill="#e3e0d4"/><path d="M-14 7h28v3q0 2-2 2h-24q-2 0-2-2z" fill="#aaa28f"/><circle cx="8" cy="-5" r="3" fill="#fff"/><circle cx="-2" cy="-2" r="6.500" fill="#f3f3ef" stroke="#555" stroke-width="1.300"/><path d="M3 3l5 5" stroke="#555" stroke-width="2.500"/></svg></div>
  <div class="app"><svg viewBox="-16 -16 32 32"><circle r="14" fill="#e2e2e2"/><circle r="11" fill="#9b9e99"/><path d="M-1-8h2V3h3L0 8-4 3h3z" fill="#444"/><path d="M-7-3H7" stroke="#df2440" stroke-width="4"/><path d="M-2.500-6h5v5h-5z" fill="#fff"/></svg></div>
  <div class="app"><svg viewBox="-16 -16 32 32"><path d="M-12-11L9-15l4 27-19 3z" fill="#ededed"/><path d="M3-12C-7-8-8 5 0 5l5-3" fill="none" stroke="#2384c4" stroke-width="3"/><path d="M-14 12c8-9 11-1 17-4s8-2 11-1M-13 8c9-2 16 4 24 4" fill="none" stroke="#3e3e3e" stroke-width="1.500"/></svg></div>
  <div class="app"><svg viewBox="-16 -16 32 32"><rect x="-12" y="-14" width="25" height="28" rx="2.500" fill="#ededed"/><path d="M-10-8H2M-10-4H6M-10 0h9M-10 4h9" stroke="#96958a"/><path d="M1-5h10v8H1z" fill="#ef5350"/><path d="M3-1c1-4 5-2 3 1h4" fill="none" stroke="#fff"/><path d="M-12 7h19" stroke="#295fa3" stroke-width="1.300"/><circle cx="-6" cy="9" r="3.500" fill="#b9cee5" stroke="#295fa3" stroke-width="1.500"/><circle cx="3" cy="9" r="3.500" fill="#b9cee5" stroke="#295fa3" stroke-width="1.500"/></svg></div>
  <div class="app"><svg viewBox="-16 -16 32 32"><rect x="-12" y="-14" width="25" height="28" rx="2.500" fill="#ececec"/><path d="M-12 3h25v9q0 2-2 2h-21q-2 0-2-2z" fill="#858585"/><text x="-11" y="0" font-size="13" fill="#444" style="font-family:'Liberation Serif',serif">A</text><path d="M1-9h11M1-5h11M1-1h11" stroke="#ccc"/><path d="M-12 3h25" stroke="#ef2323" stroke-width="2"/></svg></div>
  <div class="app"><svg viewBox="-16 -16 32 32"><rect x="-12" y="-14" width="25" height="28" rx="2.500" fill="#b3ac9b"/><path d="M0-14V0" stroke="#fff" stroke-width="4" stroke-dasharray="2 1.500"/><path d="M-2-3h4v8h-4z" fill="#fff"/><path d="M-.8 1.500h1.600v1.600H-.8z" fill="#777"/></svg></div>
  <div class="app"><svg viewBox="-16 -16 32 32"><rect x="-14" y="-14" width="28" height="28" rx="3" fill="#f7f7f7"/><text x="2" y="9" font-size="14" fill="#4a4a4a">à</text></svg></div>
  <div class="app"><svg viewBox="-16 -16 32 32"><rect x="-12" y="-14" width="24" height="28" rx="2" fill="#6a93f7"/><path d="M0-14h10q2 0 2 2v24q0 2-2 2H0z" fill="#5c82e0"/><path d="M-9-7l2.500 3 4-4M1-7h8M-9 7l2.500 3 4-4M1 7h8" fill="none" stroke="#36539d" stroke-width="1.400"/><path d="M-9 0l2.500 3 4-4M1 0h8" fill="none" stroke="#fff" stroke-width="1.600"/></svg></div>
  <div class="app"><svg viewBox="-16 -16 32 32"><path d="M0-14L14 0 0 14-14 0z" fill="#2f8062"/><path d="M-14-14h11v3h-2v12L5-11H2v-3h12v3L-3 12h-6v-23h-5z" fill="#c9c9c9" stroke="#555" stroke-width=".7"/><text x="-2" y="11" font-size="11" font-style="italic" font-weight="700" fill="#d2d2d2">im</text></svg></div>
  <div class="app"><svg viewBox="-16 -16 32 32"><rect x="-14" y="-14" width="28" height="28" rx="2.500" fill="#6591f6"/><rect x="-5" y="-4" width="16" height="13" rx="1.500" fill="#a7c0fb"/><rect x="-11" y="-9" width="16" height="13" rx="1" fill="#fff"/></svg></div>
  <div class="app"><svg viewBox="-16 -16 32 32"><circle r="14" fill="#ef5d29"/><path d="M-6 1a6 6 0 106-7" fill="none" stroke="#fff" stroke-width="3.500"/><path d="M-10 2l4-5 5 5z" fill="#fff"/></svg></div>
  <div class="app"><svg viewBox="-16 -16 32 32"><path d="M-10-14H5l7 8v18q0 2-2 2h-20q-2 0-2-2v-24q0-2 2-2z" fill="#2aa02a"/><path d="M6-14h6v8z" fill="#166016"/><path d="M-9.500-11.500H4l5.500 7v16h-19z" fill="#fff"/><path d="M-8-3H7V8H-8z" fill="#1b8c1b"/><path d="M-6.500-1H6M-6.500 2H6M-6.500 5H2" stroke="#fff" stroke-width="1.700" stroke-dasharray="3 1"/><path d="M0 3h7v7H0z" fill="#ddd" stroke="#444" stroke-width=".6"/><path d="M2 9V6M4 9V4M6 9V7" stroke="#e05a21" stroke-width="1.200"/></svg></div>
  <div class="app"><svg viewBox="-16 -16 32 32" shape-rendering="crispEdges"><path d="M-6-16H6v2h4v2H-10v-2h4z" fill="#d42a0c"/><path d="M-8-12H6v2h6v4h-2v3H-8v-3h-2v-4h2z" fill="#f79a3a"/><path d="M-10-10h2v6h-2zM-8-12h4v5h-4zM2-12h2v4H2zM2-6h8v1H2z" fill="#7a6508"/><path d="M-9-2h12v12H-9z" fill="#7a6508"/><path d="M-6-1h4v4h6v-3h3v8l-1 3H-9V8h3z" fill="#d42a0c"/><path d="M-3 2h8v5h-8z" fill="#f0f0f0"/><path d="M1 3h3v3H1z" fill="#2548d5"/><path d="M-12 12h8v4h-10v-2h2zM3 12h7v2h2v2H3z" fill="#7a6508"/></svg></div>
  <div class="app"><svg viewBox="-16 -16 32 32"><circle r="14" fill="#e21f44"/><path d="M-1.600-9h3.200L.9 4H-.9z" fill="#fff"/><circle cy="7.500" r="1.800" fill="#fff"/></svg></div>
  <div class="app"><svg viewBox="-16 -16 32 32"><rect x="-14" y="-12" width="28" height="25" rx="3" fill="#e8e8ea"/><circle r="9" fill="#4e4d55"/><circle r="7" fill="#7f5bcf"/><circle r="3" fill="#8f3fe0"/><circle cx="10" cy="-9" r="1.200" fill="#e23"/></svg></div>
  <div class="app"><svg viewBox="-16 -16 32 32"><path d="M10-12c2 9 1 16-7 18-7 1-11-2-14-6 4-1 5-5 9-5 5 0 9-1 12-7z" fill="#70695a"/><circle cx="-5" cy="-4" r="4" fill="#fff"/><circle cx="2" cy="-3.500" r="3.500" fill="#fff"/><circle cx="-4" cy="-3.500" r="1.300"/><circle cx="2" cy="-3" r="1.300"/><circle cx="-12" cy="-2" r="3" fill="#26343d"/><path d="M3 2l8 7" stroke="#e6923c" stroke-width="2.500"/><path d="M7 6l8 8" stroke="#555" stroke-width="2"/></svg></div>
  <div class="app"><svg viewBox="-16 -16 32 32"><rect x="-14" y="-14" width="28" height="28" rx="2.500" fill="#46ac9f"/><path d="M-14 6h28v6q0 2-2 2h-24q-2 0-2-2z" fill="#5cc2ae"/><text y="6" text-anchor="middle" font-size="16" fill="#fff">28</text><path d="M-13.500-3v6M13.500-3v6" stroke="#fff"/></svg></div>
  <div class="app"><svg viewBox="-16 -16 32 32"><path d="M-5 11v-23l16-3V8" fill="none" stroke="#fff" stroke-width="2"/><path d="M-5-13l17-3v5l-17 3z" fill="#fff"/><circle cx="-8" cy="10" r="4" fill="#fff"/><circle cx="8" cy="8" r="4" fill="#fff"/></svg></div>
  <div class="app"><svg viewBox="-16 -16 32 32"><rect x="-14" y="-14" width="28" height="28" rx="3.500" fill="#f6f6f6"/><path d="M-11-11h22V9h-22z" fill="#298dcc"/><path d="M-11 9a8 7 0 0110-5v5z" fill="#94d4f2"/><path d="M-1 9c2-4 1-9 0-12l-7-4M0-3l2-6M1 1c5 0 7-4 7-6M-5-5v-3M6-2h5M-8 8H9" fill="none" stroke="#133b54" stroke-width="1.600"/></svg></div>
  <svg style="margin:15px 0 0 33px" width="22" height="22" viewBox="0 0 22 22"><path d="M1 2h20M1 10h20M1 18h20" stroke="#eee" stroke-width="4" stroke-dasharray="4 4"/></svg>
</nav>
</body>
</html>
